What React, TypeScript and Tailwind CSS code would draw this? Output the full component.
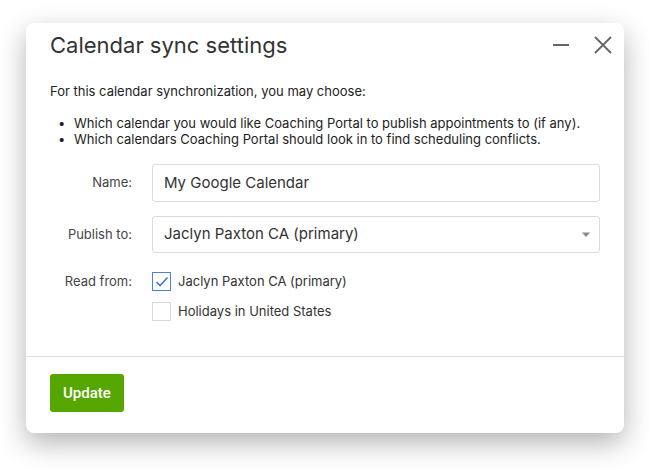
import React from "react";

export default function App() {
  return (
    <div className="w-[649px] h-[471px] bg-white pt-[23px] pl-[26px] font-['Inter',sans-serif]">
      <div className="w-[598px] h-[410px] bg-white rounded-[8px] shadow-[0_10px_28px_rgba(0,0,0,0.30)] flex flex-col">
        <div className="flex items-center h-[44px] pl-[24px] pr-[10px]">
          <div className="flex-1 text-[22px] text-[#333] leading-none">Calendar sync settings</div>
          <svg width="18" height="18" viewBox="0 0 18 18" className="mr-[24px]">
            <path d="M1 9 H17" stroke="#666" strokeWidth="2" />
          </svg>
          <svg width="18" height="18" viewBox="0 0 18 18" className="mr-[2px]">
            <path d="M1 1 L17 17 M17 1 L1 17" stroke="#666" strokeWidth="1.8" />
          </svg>
        </div>
        <div className="px-[24px] pt-[15px] text-[13px] text-[#222]">
          <p className="leading-[18px]">For this calendar synchronization, you may choose:</p>
          <ul className="mt-[15px] pl-[8px] leading-[16px]">
            <li className="flex"><span className="w-[16px]">•</span>Which calendar you would like Coaching Portal to publish appointments to (if any).</li>
            <li className="flex"><span className="w-[16px]">•</span>Which calendars Coaching Portal should look in to find scheduling conflicts.</li>
          </ul>
          <div className="mt-[17px] flex items-center">
            <div className="w-[82px] text-right text-[#444]">Name:</div>
            <div className="ml-[20px] flex-1 h-[38px] border border-[#dcdcdc] rounded-[3px] flex items-center px-[11px] text-[15px] text-[#333]">My Google Calendar</div>
          </div>
          <div className="mt-[14px] flex items-center">
            <div className="w-[82px] text-right text-[#444]">Publish to:</div>
            <div className="ml-[20px] flex-1 h-[37px] border border-[#dcdcdc] rounded-[3px] flex items-center pl-[11px] pr-[8px] text-[15px] text-[#333]">
              <span className="flex-1">Jaclyn Paxton CA (primary)</span>
              <svg width="10" height="6" viewBox="0 0 10 6"><path d="M1 0.5 H9 L5 5 Z" fill="#888" /></svg>
            </div>
          </div>
          <div className="mt-[19px] flex">
            <div className="w-[82px] text-right text-[#444] leading-[19px]">Read from:</div>
            <div className="ml-[20px] flex flex-col gap-[10px]">
              <label className="flex items-center gap-[7px]">
                <span className="w-[19px] h-[19px] border border-[#4a7fdc] flex items-center justify-center">
                  <svg width="14" height="12" viewBox="0 0 14 12"><path d="M1.5 6 L5 9.5 L12.5 1.5" stroke="#3f78d8" strokeWidth="1.6" fill="none" /></svg>
                </span>
                <span className="text-[#333]">Jaclyn Paxton CA (primary)</span>
              </label>
              <label className="flex items-center gap-[7px]">
                <span className="w-[19px] h-[19px] border border-[#d8d8d8]"></span>
                <span className="text-[#333]">Holidays in United States</span>
              </label>
            </div>
          </div>
        </div>
        <div className="mt-[auto] border-t border-[#dedede] h-[77px] px-[24px] pt-[17px]">
          <button className="h-[38px] px-[13px] bg-[#55a700] text-white rounded-[3px] text-[15px] font-medium font-['Roboto',sans-serif]">Update</button>
        </div>
      </div>
    </div>
  );
}
